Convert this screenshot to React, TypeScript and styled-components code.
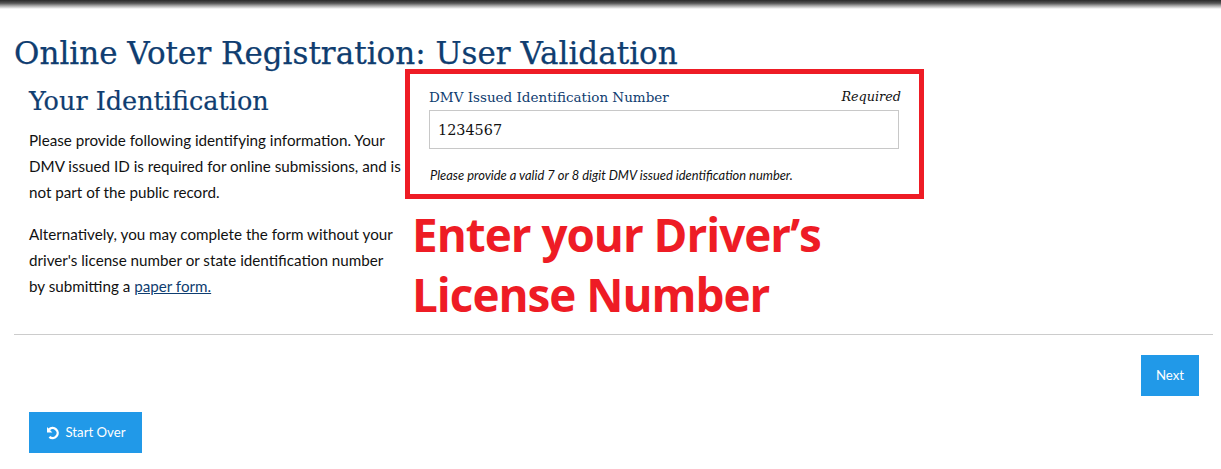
import React from "react";
import styled, { createGlobalStyle } from "styled-components";

const Global = createGlobalStyle`
  html, body { margin: 0; padding: 0; background: #fff; }
  body { width: 1221px; height: 469px; overflow: hidden; font-family: "Lato", "Noto Sans", sans-serif; }
`;
const serif = `"DejaVu Serif", "Liberation Serif", serif`;

const Page = styled.div`
  width: 1221px;
  height: 469px;
  display: flex;
  flex-direction: column;
`;
const TopShadow = styled.div`
  height: 9px;
  flex: none;
  background: linear-gradient(to bottom, #2a2a2a 0%, #555 35%, #aaa 65%, #fff 100%);
`;
const Title = styled.h1`
  margin: 24px 0 0 14px;
  height: 36px;
  font: 400 31px/40px ${serif};
  -webkit-text-stroke: 0.25px #0f3d70;
  color: #0f3d70;
  white-space: nowrap;
`;
const Columns = styled.div`
  display: grid;
  grid-template-columns: 376px 519px;
  margin-left: 29px;
  height: 265px;
`;
const Left = styled.div`
  padding-top: 16px;
`;
const Heading = styled.h2`
  margin: 0 0 10px;
  font: 400 25.5px/32px ${serif};
  -webkit-text-stroke: 0.2px #0f3d70;
  color: #0f3d70;
  white-space: nowrap;
`;
const Para = styled.p`
  margin: 0 0 16px;
  font-size: 15.2px;
  line-height: 26px;
  color: #111;
  white-space: nowrap;
`;
const PaperLink = styled.a`
  color: #0f3d70;
  text-decoration: underline;
`;
const Right = styled.div`
  display: flex;
  flex-direction: column;
`;
const Callout = styled.div`
  box-sizing: border-box;
  height: 130px;
  border: 5px solid #ee1c25;
  padding: 11px 18px 0 19px;
`;
const LabelRow = styled.div`
  display: flex;
  justify-content: space-between;
  align-items: flex-start;
  height: 25px;
`;
const Label = styled.label`
  font: 400 13.5px/24px ${serif};
  color: #0f3d70;
`;
const Req = styled.span`
  font: italic 400 12.8px/23px ${serif};
  color: #111;
`;
const Input = styled.input`
  display: block;
  box-sizing: border-box;
  width: 470px;
  height: 39px;
  border: 1px solid #c8c8c8;
  padding: 0 8px;
  font: 400 14.4px ${serif};
  font-variant-numeric: oldstyle-nums;
  color: #111;
  outline: none;
`;
const Help = styled.p`
  margin: 17px 0 0 1px;
  font-style: italic;
  font-size: 12.9px;
  line-height: 19px;
  color: #111;
`;
const Annotation = styled.div`
  margin: 5px 0 0 7px;
  font: 700 45.8px/60px "Open Sans", sans-serif;
  letter-spacing: -1px;
  color: #ee1c25;
  white-space: nowrap;
`;
const Rule = styled.hr`
  margin: 0 8px 0 14px;
  border: 0;
  border-top: 1px solid #ccc;
`;
const Actions = styled.div`
  display: flex;
  justify-content: flex-end;
  padding: 20px 22px 16px 0;
`;
const Button = styled.button`
  height: 41px;
  border: 0;
  background: #2199e8;
  color: #fefefe;
  font: 400 13.2px/39px "Lato", "Noto Sans", sans-serif;
  display: inline-flex;
  align-items: center;
  justify-content: center;
  gap: 6px;
  padding: 0;
`;
const NextButton = styled(Button)`
  width: 58px;
`;
const StartButton = styled(Button)`
  width: 113px;
  margin-left: 29px;
`;

export default function App() {
  return (
    <Page>
      <Global />
      <TopShadow />
      <Title>Online Voter Registration: User Validation</Title>
      <Columns>
        <Left>
          <Heading>Your Identification</Heading>
          <Para>
            Please provide following identifying information. Your<br />
            DMV issued ID is required for online submissions, and is<br />
            not part of the public record.
          </Para>
          <Para>
            Alternatively, you may complete the form without your<br />
            driver's license number or state identification number<br />
            by submitting a <PaperLink href="#">paper form.</PaperLink>
          </Para>
        </Left>
        <Right>
          <Callout>
            <LabelRow>
              <Label>DMV Issued Identification Number</Label>
              <Req>Required</Req>
            </LabelRow>
            <Input defaultValue="1234567" />
            <Help>Please provide a valid 7 or 8 digit DMV issued identification number.</Help>
          </Callout>
          <Annotation>
            Enter your Driver’s<br />
            License Number
          </Annotation>
        </Right>
      </Columns>
      <Rule />
      <Actions>
        <NextButton>Next</NextButton>
      </Actions>
      <div>
        <StartButton>
          <svg width="14" height="14" viewBox="0 0 14 14" fill="none" stroke="#fefefe" strokeWidth="2.4">
            <path d="M3 3.6 A5 5 0 1 1 3.4 10.8" />
            <path d="M1 1 V6.4 H6.4 Z" fill="#fefefe" stroke="none" />
          </svg>
          Start Over
        </StartButton>
      </div>
    </Page>
  );
}
